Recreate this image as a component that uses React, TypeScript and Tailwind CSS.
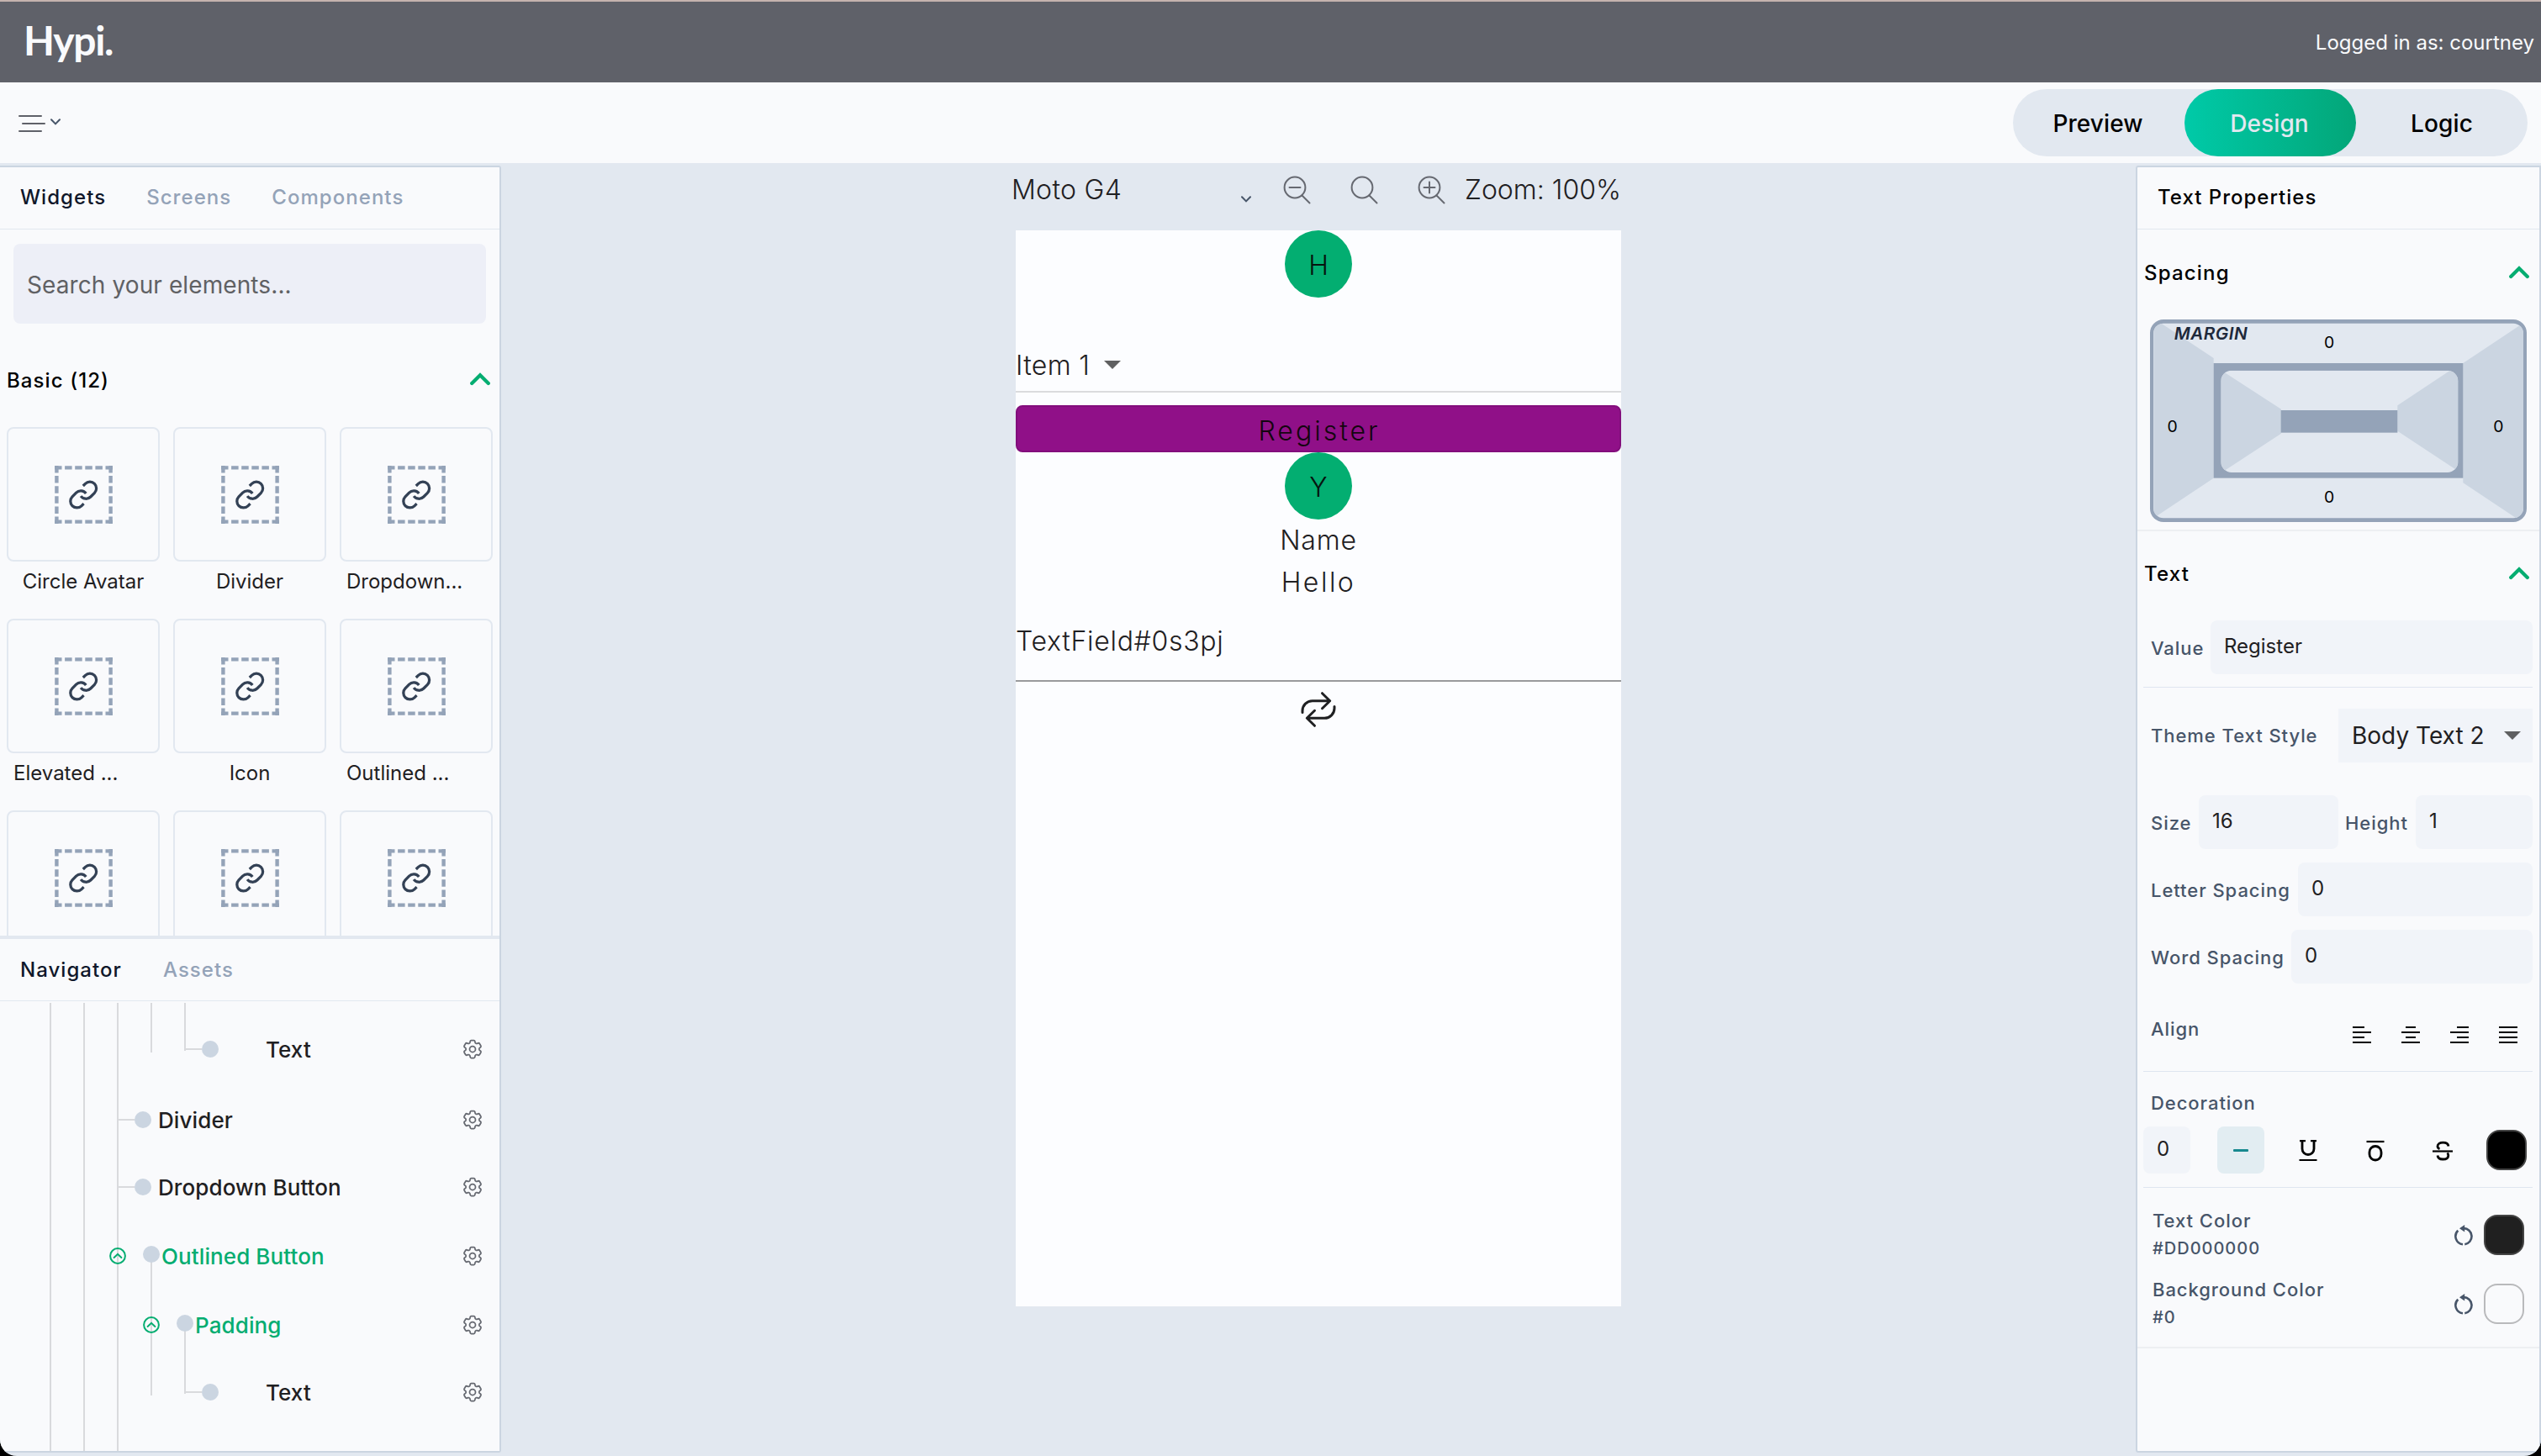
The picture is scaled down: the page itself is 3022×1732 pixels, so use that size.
import { ReactNode } from 'react'
import { HiOutlineCog6Tooth } from 'react-icons/hi2'

const WIDGETS: { name: string; centered?: boolean }[] = [
  { name: 'Circle Avatar', centered: true },
  { name: 'Divider', centered: true },
  { name: 'Dropdown...' },
  { name: 'Elevated ...' },
  { name: 'Icon', centered: true },
  { name: 'Outlined ...' },
  { name: '' },
  { name: '' },
  { name: '' },
]

type TreeRow = { label: string; height: string; kind: 'leaf' | 'parent'; dot: string; text: string; indent?: string }

const TREE: TreeRow[] = [
  { label: 'Text', height: 'h-[84px]', kind: 'leaf', dot: 'ml-[240px]', text: 'ml-[56px]' },
  { label: 'Divider', height: 'h-[84px]', kind: 'leaf', dot: 'ml-[160px]', text: 'ml-[8px]' },
  { label: 'Dropdown Button', height: 'h-[76px]', kind: 'leaf', dot: 'ml-[160px]', text: 'ml-[8px]' },
  { label: 'Outlined Button', height: 'h-[88px]', kind: 'parent', indent: 'ml-[130px]', dot: 'ml-[20px]', text: 'ml-[2px]' },
  { label: 'Padding', height: 'h-[76px]', kind: 'parent', indent: 'ml-[170px]', dot: 'ml-[20px]', text: 'ml-[2px]' },
  { label: 'Text', height: 'h-[84px]', kind: 'leaf', dot: 'ml-[240px]', text: 'ml-[56px]' },
]

function ChevronUp() {
  return (
    <svg className="-mt-[2px]" width="24" height="16" viewBox="0 0 24 16" fill="none" stroke="#05ad71" strokeWidth="4.2" strokeLinecap="round">
      <path d="M2.2 13 12 3.200l9.800 9.800" />
    </svg>
  )
}

function ChevronDown({ className }: { className?: string }) {
  return (
    <svg className={className} width="12" height="8" viewBox="0 0 12 8" fill="none" stroke="#475569" strokeWidth="2" strokeLinecap="round">
      <path d="M1 1.200 6 6.400l5-5.200" />
    </svg>
  )
}

function Magnifier({ children }: { children?: ReactNode }) {
  return (
    <svg width="34" height="36" viewBox="0 0 34 36" fill="none" stroke="#666971" strokeWidth="2" strokeLinecap="round">
      <circle cx="14" cy="16" r="12.4" />
      <path d="M22.500 25.500 31.500 34.500" />
      {children}
    </svg>
  )
}

function WidgetIcon() {
  return (
    <svg width="69" height="69" viewBox="0 0 69 69" fill="none">
      <g stroke="#94a3b8" strokeWidth="4.4" strokeDasharray="8.500 3.600">
        <path d="M0 2.400H69M0 66.600H69M2.400 0V69M66.600 0V69" />
      </g>
      <g transform="translate(15.600 16) scale(1.550)" stroke="#334155" strokeWidth="2.100">
        <path d="M10 13a5 5 0 0 0 7.540.540l3-3a5 5 0 0 0-7.070-7.070l-1.720 1.710" />
        <path d="M14 11a5 5 0 0 0-7.540-.540l-3 3a5 5 0 0 0 7.070 7.070l1.710-1.710" />
      </g>
    </svg>
  )
}

function ExpandIcon() {
  return (
    <svg width="20" height="20" viewBox="0 0 20 20" fill="none" stroke="#05ad71" strokeWidth="2">
      <circle cx="10" cy="10" r="8.900" />
      <path d="M5.600 12 10 7.800l4.400 4.200" strokeLinecap="round" />
    </svg>
  )
}

function TreeGuides() {
  return (
    <svg className="absolute left-0 top-[2px]" width="300" height="533" stroke="#d9dadd" strokeWidth="2">
      <path d="M60 0V533M100 0V533M140 0V533M180 0V59M220 0V57M220 55H240M140 139H160M140 219H160M180 299V467M220 381V465M220 463H240" />
    </svg>
  )
}

function LeftPanel() {
  return (
    <aside className="flex w-[596px] shrink-0 flex-col rounded-r-[3px] border-y-2 border-r-2 border-[#cbd5e1] bg-[#f9fafc]">
      <div className="h-[914px] shrink-0 overflow-hidden">
        <div className="flex h-[74px] items-center gap-[48px] border-b border-[#e2e8f0] pb-[2px] pl-[24px] font-medium leading-none tracking-[1.050px] text-[#94a3b8]">
          <span className="text-[#0f172a]">Widgets</span>
          <span>Screens</span>
          <span>Components</span>
        </div>
        <div className="mx-[16px] mt-[17px] flex h-[95px] items-center rounded-[8px] bg-[#edeff7] px-[16px] pt-[2px] text-[28px] leading-none tracking-[0.1px] text-[#606164]">
          Search your elements...
        </div>
        <div className="flex h-[123px] items-center justify-between pl-[8px] pr-[11px] pt-[11px]">
          <span className="pt-[2px] font-medium leading-none tracking-[1.1px]">Basic (12)</span>
          <ChevronUp />
        </div>
        <div className="ml-[8px] grid w-[578px] grid-cols-3 gap-x-[16px] gap-y-[22px]">
          {WIDGETS.map((w, i) => (
            <div key={i} className="w-[182px]">
              <div className="flex h-[160px] items-center justify-center rounded-[8px] border-2 border-[#e2e8f0]">
                <WidgetIcon />
              </div>
              <div className={`flex h-[46px] items-center px-[8px] pt-[2px] leading-none text-[#1f2022] ${w.centered ? 'justify-center' : ''}`}>{w.name}</div>
            </div>
          ))}
        </div>
      </div>

      <div className="flex h-[78px] shrink-0 items-center gap-[49px] border-b border-t-4 border-[#e2e8f0] pl-[24px] font-medium leading-none tracking-[1.050px] text-[#94a3b8]">
        <span className="text-[#0f172a]">Navigator</span>
        <span>Assets</span>
      </div>
      <div className="relative flex-1 pt-[15px]">
        <TreeGuides />
        {TREE.map((row, i) => (
          <div key={i} className={`relative flex items-center pr-[18px] ${row.height}`}>
            {row.kind === 'parent' && (
              <span className={row.indent}><ExpandIcon /></span>
            )}
            <span className={`size-[20px] rounded-full bg-[#cbd5e1] ${row.dot} ${row.kind === 'parent' ? '-mt-[4px]' : ''}`} />
            <span className={`pt-[2px] text-[26px] font-medium leading-none tracking-[0.1px] ${row.text} ${row.kind === 'parent' ? 'text-[#05ad71]' : 'text-[#1f2022]'}`}>
              {row.label}
            </span>
            <HiOutlineCog6Tooth className="ml-auto size-[28px] text-[#666971]" />
          </div>
        ))}
      </div>
    </aside>
  )
}

function Canvas() {
  return (
    <main className="flex flex-1 flex-col items-center pt-[3px]">
      <div className="mb-[21px] flex h-[56px] w-[730px] items-center text-[32px] font-light leading-none text-[#1f2022]">
        <div className="flex w-[285px] items-center justify-between">
          <span className="pt-[2px] tracking-[0.3px]">Moto G4</span>
          <ChevronDown className="mt-[24px]" />
        </div>
        <div className="ml-[38px] flex gap-[46px]">
          <Magnifier><path d="M7.500 16h13" /></Magnifier>
          <Magnifier />
          <Magnifier><path d="M7.500 16h13M14 9.500v13" /></Magnifier>
        </div>
        <span className="ml-[22px] whitespace-nowrap pt-[2px]">Zoom: 100%</span>
      </div>

      <div className="flex h-[1280px] w-[720px] flex-col items-center bg-[#fcfdff] text-[32px] font-light leading-none text-[#1f2022]">
        <div className="flex size-[80px] items-center justify-center rounded-full bg-[#03ae71] pt-[4px] text-[#06140f]">H</div>
        <div className="mt-[49px] flex h-[62px] w-full items-center gap-[17px] tracking-[0.3px]">
          <span className="pt-[1px]">Item 1</span>
          <svg width="20" height="10" viewBox="0 0 20 10" fill="#5f6061"><path d="M0 0h20L10 10z" /></svg>
        </div>
        <div className="h-[2px] w-full bg-[#dadbdd]" />
        <div className="mt-[15px] flex h-[56px] w-full items-center justify-center rounded-[8px] border-2 border-[#820e7c] bg-[#901088] pl-[2px] pt-[5px] tracking-[3px] text-[#14050f]">
          Register
        </div>
        <div className="flex size-[80px] items-center justify-center rounded-full bg-[#03ae71] pt-[4px] text-[#06140f]">Y</div>
        <div className="flex h-[50px] items-center tracking-[0.8px]">Name</div>
        <div className="flex h-[50px] items-center tracking-[2.5px]">Hello</div>
        <div className="flex h-[93px] w-full items-center border-b-2 border-[#999a9c] pb-[2px] tracking-[0.7px]">TextField#0s3pj</div>
        <svg className="mt-[9px]" width="48" height="48" viewBox="0 0 48 48" fill="none" stroke="#1f2022" strokeWidth="3" strokeLinecap="round" strokeLinejoin="round">
          <path d="M5 27.500v-2A11.800 11.800 0 0 1 16.800 13.700H37.500M28.500 4.700 37.700 13.700 28.500 22.700" />
          <path d="M43 20.500v2A11.800 11.800 0 0 1 31.200 34.300H10.500M19.500 43.300 10.300 34.300 19.500 25.300" />
        </svg>
      </div>
    </main>
  )
}

function SectionHeader({ children, className }: { children: ReactNode; className: string }) {
  return (
    <div className={`flex items-center justify-between pb-[4px] pl-[8px] pr-[12px] ${className}`}>
      <span className="font-medium leading-none tracking-[1.2px]">{children}</span>
      <ChevronUp />
    </div>
  )
}

function Label({ children, className = '' }: { children: ReactNode; className?: string }) {
  return <span className={`shrink-0 whitespace-nowrap text-[22px] font-medium leading-none tracking-[0.950px] text-[#475569] ${className}`}>{children}</span>
}

function Field({ value, className }: { value: string; className: string }) {
  return (
    <div className={`flex h-[64px] shrink-0 items-center rounded-[8px] bg-[#f1f4f9] pb-[2px] pl-[16px] leading-none text-[#1f2022] ${className}`}>{value}</div>
  )
}

function MarginBox() {
  return (
    <svg className="ml-[15px]" width="448" height="241" viewBox="80 270 1344 723" fontFamily="Inter, sans-serif">
      <defs>
        <clipPath id="outer"><rect x="92" y="284" width="1320" height="695" rx="36" /></clipPath>
        <clipPath id="inner"><rect x="333" y="452" width="846" height="364" rx="38" /></clipPath>
      </defs>
      <rect x="80" y="270" width="1344" height="723" rx="48" fill="#94a3b8" />
      <g clipPath="url(#outer)">
        <rect x="80" y="270" width="1344" height="723" fill="#e2e8f0" />
        <path d="M93 266 307 408V836L93 979ZM1412 283 1197 426V853L1412 996Z" fill="#cbd5e1" />
      </g>
      <rect x="307" y="426" width="890" height="410" fill="#94a3b8" />
      <g clipPath="url(#inner)">
        <rect x="333" y="452" width="846" height="364" fill="#e2e8f0" />
        <path d="M333 451 548 590V677L333 818ZM1190 426 963 577V668L1190 818Z" fill="#cbd5e1" />
      </g>
      <rect x="547" y="594" width="416" height="80" fill="#94a3b8" />
      <text x="166" y="343" fontSize="62" fontWeight="600" fontStyle="italic" letterSpacing="1.5" fill="#1e293b">MARGIN</text>
      <g fontSize="58" textAnchor="middle" fill="#000">
        <text x="719" y="371">0</text>
        <text x="160" y="671">0</text>
        <text x="1323" y="671">0</text>
        <text x="719" y="923">0</text>
      </g>
    </svg>
  )
}

const ALIGN_ICONS = [
  'M0 2h14M0 8h22M0 14h14M0 20h22',
  'M5 2h12M0 8h22M5 14h12M0 20h22',
  'M8 2h14M0 8h22M8 14h14M0 20h22',
  'M0 2h22M0 8h22M0 14h22M0 20h22',
]

function ResetIcon() {
  return (
    <svg width="24" height="25" viewBox="0 0 24 25" fill="none" stroke="#475569" strokeWidth="2.600">
      <path d="M4.300 6.800A9.600 9.600 0 0 0 10 23.200M12.300 23.200A9.600 9.600 0 0 0 11 4.100" />
      <path d="M12.200 0v8.600L6 4.300Z" fill="#475569" stroke="none" />
    </svg>
  )
}

function ColorRow({ label, value, swatch }: { label: string; value: string; swatch: string }) {
  return (
    <div className="flex h-[82px] items-center pl-[18px] pr-[18px]">
      <div className="flex flex-col gap-[12px] pb-[3px] text-[#475569]">
        <Label>{label}</Label>
        <span className="text-[20px] font-medium leading-none tracking-[1px]">{value}</span>
      </div>
      <div className="ml-auto flex items-center gap-[11px]">
        <ResetIcon />
        <span className={`size-[48px] rounded-[16px] border-2 ${swatch}`} />
      </div>
    </div>
  )
}

function RightPanel() {
  return (
    <aside className="w-[482px] shrink-0 rounded-l-[3px] border-2 border-[#cbd5e1] bg-[#f9fafc]">
      <div className="flex h-[74px] items-center border-b border-[#e2e8f0] pb-[2px] pl-[24px] font-medium leading-none tracking-[1px]">Text Properties</div>
      <SectionHeader className="h-[107px]">Spacing</SectionHeader>
      <MarginBox />
      <div className="mt-[9px] h-[2px] bg-[#edeff2]" />
      <SectionHeader className="h-[106px]">Text</SectionHeader>

      <div className="ml-[7px] w-[463px]">
        <div className="flex items-center border-b border-[#dfe5f0] pb-[15px]">
          <Label className="w-[80px] pl-[9px] pt-[2px]">Value</Label>
          <Field value="Register" className="w-[383px]" />
        </div>
        <div className="mt-[25px] flex items-center">
          <Label className="w-[232px] pl-[9px]">Theme Text Style</Label>
          <div className="flex h-[64px] w-[231px] items-center justify-between bg-[#f1f4f9] pl-[16px] pr-[14px] text-[28px] leading-none text-[#1f2022]">
            Body Text 2
            <svg width="20" height="10" viewBox="0 0 20 10" fill="#5f6061"><path d="M0 0h20L10 10z" /></svg>
          </div>
        </div>
        <div className="mt-[39px] flex items-center">
          <Label className="w-[66px] pl-[9px] pt-[2px]">Size</Label>
          <Field value="16" className="w-[166px]" />
          <Label className="w-[92px] pl-[8px] pt-[2px]">Height</Label>
          <Field value="1" className="w-[139px]" />
        </div>
        <div className="mt-[16px] flex items-center">
          <Label className="w-[184px] pl-[9px] pt-[2px]">Letter Spacing</Label>
          <Field value="0" className="w-[279px]" />
        </div>
        <div className="mt-[16px] flex items-center">
          <Label className="w-[176px] pl-[9px] pt-[2px]">Word Spacing</Label>
          <Field value="0" className="w-[287px]" />
        </div>
        <div className="flex h-[105px] justify-between border-b border-[#dfe5f0] pl-[9px] pr-[18px] pt-[43px]">
          <Label>Align</Label>
          <div className="flex gap-[36px] pt-[7px]">
            {ALIGN_ICONS.map(d => (
              <svg key={d} width="22" height="22" viewBox="0 0 22 22" stroke="#000" strokeWidth="2.200"><path d={d} /></svg>
            ))}
          </div>
        </div>
        <div className="flex h-[65px] pl-[9px] pt-[26px]"><Label>Decoration</Label></div>
        <div className="flex h-[73px] items-start border-b border-[#dfe5f0]">
          <span className="flex size-[56px] items-center rounded-[8px] bg-[#f1f4f9] pb-[2px] pl-[16px] leading-none text-[#1f2022]">0</span>
          <span className="ml-[32px] flex size-[56px] items-center justify-center rounded-[8px] bg-[#e2edf2]">
            <span className="h-[3px] w-[18px] rounded-[1px] bg-[#17898f]" />
          </span>
          <svg className="ml-[38px] mt-[15px]" width="28" height="28" viewBox="0 0 28 28" fill="none" stroke="#000" strokeWidth="2.800">
            <path d="M7 2.500v9a7 7 0 0 0 14 0v-9" />
            <path d="M4 2.200h7M17 2.200h7M3.500 25h21" strokeWidth="2.200" />
          </svg>
          <svg className="ml-[52px] mt-[15px]" width="28" height="28" viewBox="0 0 28 28" fill="none" stroke="#000" strokeWidth="2.800">
            <rect x="7" y="8.500" width="14" height="16.500" rx="7" />
            <path d="M3.500 3h21" strokeWidth="2.200" />
          </svg>
          <svg className="ml-[52px] mt-[15px]" width="28" height="28" viewBox="0 0 28 28" fill="none" stroke="#000" strokeWidth="2.800">
            <path d="M21 8.500C20.500 5.500 18 4.200 14.500 4.200c-4 0-6.500 1.600-6.500 4.400 0 1.400.8 2.600 2.500 3.200M8 19.500c.3 3 2.700 4.500 6.200 4.500 4 0 6.600-1.600 6.600-4.600 0-1.300-.5-2.200-1.300-2.900" />
            <path d="M2 14.500h24" strokeWidth="2.200" />
          </svg>
          <span className="ml-[38px] mt-[4px] size-[48px] shrink-0 rounded-[16px] border-2 border-[#444] bg-black" />
        </div>
      </div>

      <div className="border-b-2 border-[#edeff2] pb-[10px] pt-[15px]">
        <ColorRow label="Text Color" value="#DD000000" swatch="border-[#444] bg-[#202020]" />
        <ColorRow label="Background Color" value="#0" swatch="border-[#b9babc]" />
      </div>
    </aside>
  )
}

export default function App() {
  return (
    <div className="h-[1732px] w-[3022px] bg-black">
      <div className="flex h-full flex-col overflow-hidden rounded-b-[20px] bg-[#e2e8f0] font-['Inter',sans-serif] text-[24px] text-black">
        <header className="flex h-[98px] shrink-0 items-center justify-between border-t-2 border-[#c5b3ae] bg-[#5f6169] pl-[28px] pr-[8px] text-[#f9fafc]">
          <span className="pb-[5px] font-['Lato',sans-serif] text-[48px] font-bold leading-none tracking-[-1.3px]">Hypi.</span>
          <span className="pt-[2px] leading-none">Logged in as: courtney</span>
        </header>

        <div className="flex h-[96px] shrink-0 items-center justify-between bg-[#f9fafc] pl-[22px] pr-[16px]">
          <div className="flex items-center gap-[6px] pt-[2px]">
            <svg width="32" height="22" viewBox="0 0 32 22" stroke="#5f6169" strokeWidth="2" strokeLinecap="round">
              <path d="M1 2h26M5 11h26M1 20h26" />
            </svg>
            <ChevronDown className="-mt-[4px]" />
          </div>
          <div className="grid h-[80px] w-[612px] grid-cols-3 rounded-full bg-[#e2e8f0] text-[28px] font-medium leading-none tracking-[0.1px]">
            <span className="flex items-center justify-center pr-[2px] pt-[2px]">Preview</span>
            <span className="flex items-center justify-center rounded-full bg-linear-to-r from-[#00caa8] to-[#03a678] pr-[2px] pt-[2px] text-[#e2e8f0]">Design</span>
            <span className="flex items-center justify-center pt-[2px]">Logic</span>
          </div>
        </div>

        <div className="flex flex-1 pb-[4px]">
          <div className="flex pt-[3px]"><LeftPanel /></div>
          <Canvas />
          <div className="flex pt-[3px]"><RightPanel /></div>
        </div>
      </div>
    </div>
  )
}
